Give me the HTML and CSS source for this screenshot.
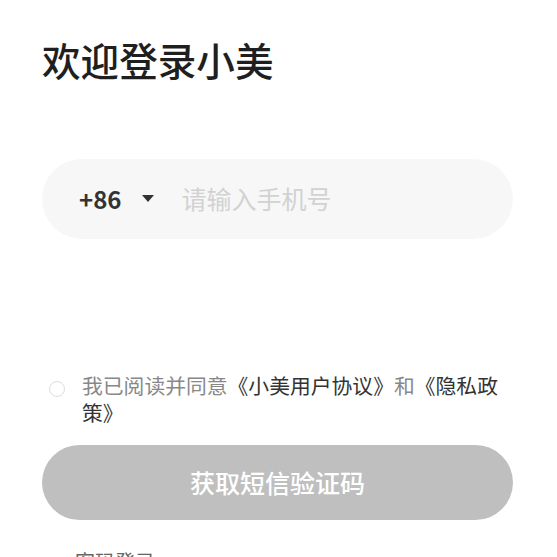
FILE: index.html
```html
<!DOCTYPE html>
<html lang="zh-CN">
<head>
<meta charset="utf-8">
<title>欢迎登录小美</title>
<link rel="stylesheet" href="styles.css">
</head>
<body>
<main class="page">
  <h1 class="title">欢迎登录小美</h1>
  <div class="phone">
    <span class="code">+86</span>
    <span class="arrow"></span>
    <span class="placeholder">请输入手机号</span>
  </div>
  <div class="agree">
    <span class="check"></span>
    <p class="agree-text">我已阅读并同意<span class="link">《小美用户协议》</span>和<span class="link">《隐私政策》</span></p>
  </div>
  <div class="btn">获取短信验证码</div>
  <div class="alt">密码登录</div>
</main>
</body>
</html>
```
FILE: styles.css
```css
html, body {
  margin: 0;
  padding: 0;
  background: #ffffff;
}
body {
  font-family: "Noto Sans CJK SC", "Noto Sans", sans-serif;
  overflow: hidden;
}
.page {
  padding: 40px 44px 0 42px;
}
.title {
  margin: 0;
  font-size: 38.6px;
  line-height: 1;
  font-weight: 500;
  color: #1f1f1f;
}
.phone {
  margin-top: 80.4px;
  height: 80px;
  border-radius: 40px;
  background: #f7f7f7;
  display: flex;
  align-items: center;
  padding-left: 37px;
}
.code {
  font-size: 24px;
  font-weight: 700;
  color: #333333;
  line-height: 1;
}
.arrow {
  margin-left: 21px;
  width: 0;
  height: 0;
  border-left: 6.5px solid transparent;
  border-right: 6.5px solid transparent;
  border-top: 7px solid #333333;
}
.placeholder {
  margin-left: 27px;
  font-size: 25px;
  color: #d2d2d2;
  line-height: 1;
}
.agree {
  margin-top: 133px;
  display: flex;
  align-items: flex-start;
  padding-left: 7px;
}
.check {
  flex: none;
  width: 14px;
  height: 14px;
  border: 1.5px solid #dddddd;
  border-radius: 50%;
  margin-top: 9px;
  margin-right: 17px;
}
.agree-text {
  margin: 0;
  font-size: 20.8px;
  line-height: 27px;
  color: #888888;
}
.link {
  color: #333333;
}
.btn {
  margin-top: 19px;
  height: 75px;
  border-radius: 37.5px;
  background: #bfbfbf;
  color: #ffffff;
  font-size: 25px;
  font-weight: 500;
  display: flex;
  align-items: center;
  justify-content: center;
}
.alt {
  margin-top: 28.5px;
  padding-left: 33px;
  font-size: 20px;
  line-height: 27px;
  color: #666666;
}
```
